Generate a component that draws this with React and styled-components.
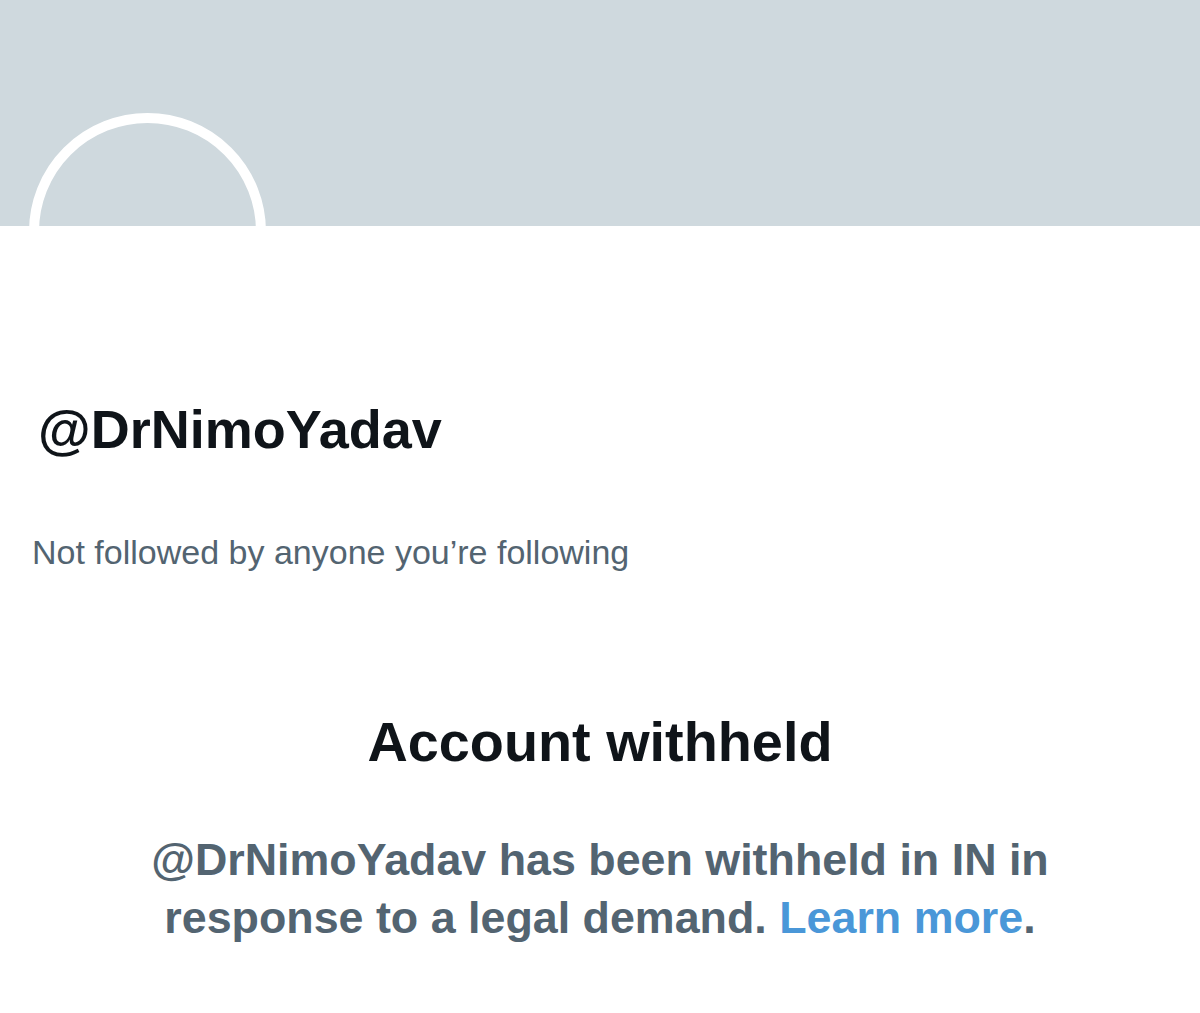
import styled, { createGlobalStyle } from "styled-components";

const GlobalStyle = createGlobalStyle`
  html, body {
    margin: 0;
    padding: 0;
    background: #FFFFFF;
  }

  body {
    font-family: "Liberation Sans", Arial, sans-serif;
    color: #0F1419;
  }
`;

const Page = styled.div`
  width: 1200px;
  height: 1013px;
  overflow: hidden;
  background: #FFFFFF;
`;

const Banner = styled.div`
  height: 226px;
  background-color: #CFD9DE;
`;

const Avatar = styled.div`
  box-sizing: border-box;
  width: 237px;
  height: 237px;
  margin: -113px 0 0 29px;
  border: 10px solid #FFFFFF;
  border-radius: 50%;
  background: transparent;
`;

const Info = styled.div`
  padding-left: 32px;
`;

const Handle = styled.h1`
  margin: 52px 0 0 6px;
  font-size: 54px;
  line-height: 1;
  font-weight: 700;
  color: #0F1419;
`;

const FollowNote = styled.p`
  margin: 79px 0 0 0;
  font-size: 34px;
  line-height: 1;
  color: #536471;
`;

const Notice = styled.section`
  display: flex;
  flex-direction: column;
  align-items: center;
  text-align: center;
`;

const Title = styled.h2`
  margin: 145px 0 0 0;
  font-size: 55.8px;
  line-height: 1;
  font-weight: 700;
  color: #0F1419;
`;

const Message = styled.p`
  width: 930px;
  margin: 60px 0 0 0;
  font-size: 44.8px;
  line-height: 58px;
  font-weight: 700;
  color: #536471;
`;

const LearnMore = styled.a`
  color: #4A97D8;
  text-decoration: none;
`;

export default function App() {
  return (
    <Page>
      <GlobalStyle />
      <Banner />
      <Avatar />
      <Info>
        <Handle>@DrNimoYadav</Handle>
        <FollowNote>Not followed by anyone you’re following</FollowNote>
      </Info>
      <Notice>
        <Title>Account withheld</Title>
        <Message>
          @DrNimoYadav has been withheld in IN in response to a legal demand.{" "}
          <LearnMore href="#">Learn more</LearnMore>.
        </Message>
      </Notice>
    </Page>
  );
}
